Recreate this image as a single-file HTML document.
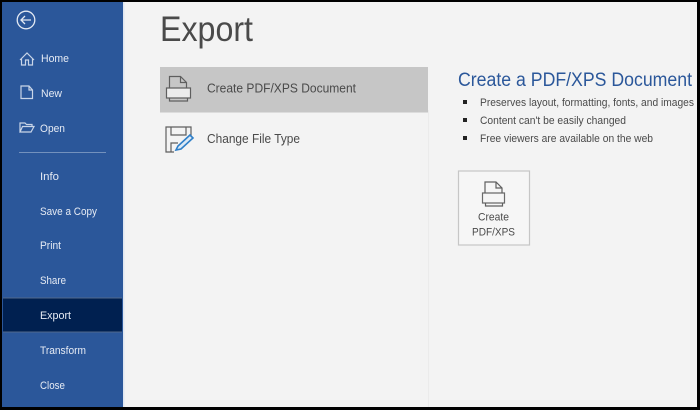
<!DOCTYPE html>
<html>
<head>
<meta charset="utf-8">
<style>
html,body{margin:0;padding:0;width:700px;height:410px;overflow:hidden;background:#000}
svg{display:block}
text{font-family:"Liberation Sans",sans-serif}
.n{fill:#e6ebf4;font-size:11px}
.d{fill:#4a4a4a;font-size:11px}
.i{fill:none;stroke:#c9d5e8;stroke-width:1.2}
.p{fill:none;stroke:#5f5f5f;stroke-width:1.2}
.soft{filter:blur(.3px)}
</style>
</head>
<body>
<svg width="700" height="410" viewBox="0 0 700 410" xmlns="http://www.w3.org/2000/svg">
<rect width="700" height="410" fill="#000"/>
<rect x="2" y="2" width="695" height="405" fill="#f3f3f3"/>
<rect x="2" y="2" width="121" height="405" fill="#2b579a"/>
<rect x="123" y="2" width="1.500" height="405" fill="#dfe6f0"/>
<rect x="428" y="110" width="1" height="297" fill="#ebebeb"/>
<rect x="160" y="67" width="268" height="45.500" fill="#c6c6c6"/>
<rect x="3" y="298" width="119" height="34" fill="#002050"/>
<rect x="3" y="297.500" width="119" height="1" fill="#51688c"/>
<rect x="3" y="331.500" width="119" height="1" fill="#51688c"/>
<rect x="19" y="152" width="87" height="1" fill="#7391bd"/>
<rect x="463" y="100" width="4" height="4" fill="#222"/>
<rect x="463" y="118" width="4" height="4" fill="#222"/>
<rect x="463" y="136" width="4" height="4" fill="#222"/>
<rect x="458.500" y="171" width="71" height="74" fill="#f6f6f6" stroke="#c6c6c6" stroke-width="1.200"/>

<g class="soft">
<circle cx="26" cy="20" r="8.800" fill="none" stroke="#e3e9f3" stroke-width="1.300"/>
<path d="M31 20H21M25 16l-4 4 4 4" fill="none" stroke="#e3e9f3" stroke-width="1.300"/>
<path class="i" d="M20 60l7-7 7 7M21.500 58.500V65h4v-5h3v5h4v-6.500"/>
<path class="i" d="M21 86h8l3.500 4v8.500H21zM29 86v4h3.500"/>
<path class="i" d="M20 132v-9h5l1.500 1.500H32v2M20 132l2.500-5.500H34L31 132z"/>

<text class="n" x="41" y="62" textLength="28" lengthAdjust="spacingAndGlyphs">Home</text>
<text class="n" x="41" y="97" textLength="21" lengthAdjust="spacingAndGlyphs">New</text>
<text class="n" x="40" y="132" textLength="25" lengthAdjust="spacingAndGlyphs">Open</text>
<text class="n" x="40" y="180" textLength="19" lengthAdjust="spacingAndGlyphs">Info</text>
<text class="n" x="40" y="215" textLength="57" lengthAdjust="spacingAndGlyphs">Save a Copy</text>
<text class="n" x="40" y="249" textLength="21" lengthAdjust="spacingAndGlyphs">Print</text>
<text class="n" x="40" y="284" textLength="26" lengthAdjust="spacingAndGlyphs">Share</text>
<text class="n" x="40" y="319" textLength="31" lengthAdjust="spacingAndGlyphs">Export</text>
<text class="n" x="40" y="354" textLength="46" lengthAdjust="spacingAndGlyphs">Transform</text>
<text class="n" x="40" y="389" textLength="25" lengthAdjust="spacingAndGlyphs">Close</text>

<text x="160" y="41" font-size="35" fill="#4a4a4a" textLength="93" lengthAdjust="spacingAndGlyphs">Export</text>

<path d="M166.500 88h24v10h-24z" fill="#ececec" stroke="#5f5f5f" stroke-width="1.200"/>
<path class="p" d="M169.500 88V76.500h11l6 6V88M180.500 76.500v6h6M169.500 98v3h18v-3"/>
<text class="d" x="207" y="92.500" style="font-size:12.500px" textLength="149" lengthAdjust="spacingAndGlyphs">Create PDF/XPS Document</text>

<path class="p" d="M174 152h-8v-25h25v11M171 127v8h15v-8M171 152v-9h7"/>
<path d="M176 150l2-4 12-11 3 3-12 11z" fill="#dce9f5" stroke="#2f7fc8" stroke-width="1.600"/>
<text class="d" x="207" y="143" style="font-size:12.500px" textLength="93" lengthAdjust="spacingAndGlyphs">Change File Type</text>

<text x="458" y="86" font-size="19" fill="#2b579a" textLength="234" lengthAdjust="spacingAndGlyphs">Create a PDF/XPS Document</text>
<text class="d" x="480" y="106" textLength="214" lengthAdjust="spacingAndGlyphs">Preserves layout, formatting, fonts, and images</text>
<text class="d" x="480" y="124" textLength="146" lengthAdjust="spacingAndGlyphs">Content can't be easily changed</text>
<text class="d" x="480" y="142" textLength="173" lengthAdjust="spacingAndGlyphs">Free viewers are available on the web</text>

<path d="M482.500 193h22v10h-22z" fill="none" stroke="#6a6a6a" stroke-width="1.200"/>
<path class="p" d="M485 193v-11h11l6 6v5M496 182v6h6M485.500 203v3h17v-3"/>
<text class="d" x="478" y="220.500" textLength="31" lengthAdjust="spacingAndGlyphs">Create</text>
<text class="d" x="472" y="235.500" textLength="43" lengthAdjust="spacingAndGlyphs">PDF/XPS</text>
</g>
</svg>
</body>
</html>
